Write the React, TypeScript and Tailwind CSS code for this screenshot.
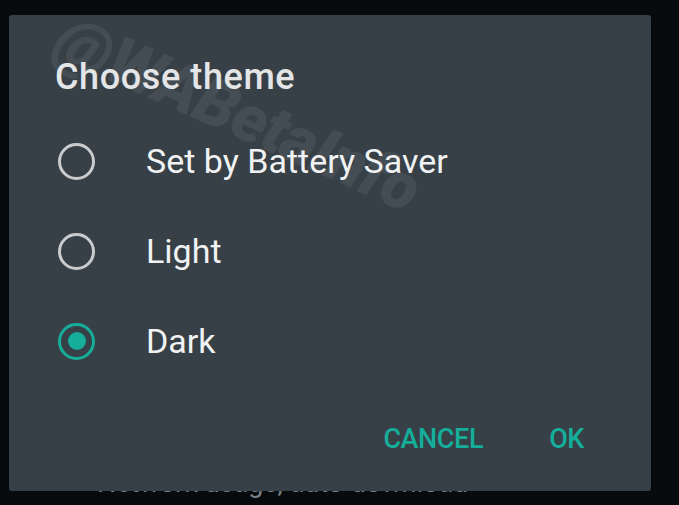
import { useState } from "react";

const options = ["Set by Battery Saver", "Light", "Dark"];

function Radio({ checked }: { checked: boolean }) {
  if (checked) {
    return (
      <span className="flex h-[37px] w-[37px] items-center justify-center rounded-full border-[3.5px] border-[#14ae9b]">
        <span className="h-[18px] w-[18px] rounded-full bg-[#14ae9b]" />
      </span>
    );
  }
  return <span className="block h-[37px] w-[37px] rounded-full border-[3.5px] border-[#c9cbcd]" />;
}

export default function App() {
  const [theme, setTheme] = useState("Dark");

  return (
    <div
      className="relative h-[505px] w-[679px] overflow-hidden bg-[#070b0e] pl-[9px] pt-[15px]"
      style={{ fontFamily: "Roboto, 'Noto Sans', sans-serif" }}
    >
      {/* text of the settings page peeking out below the dialog */}
      <div className="absolute left-[97px] top-[470px] text-[27px] leading-none text-[#7a8085]">
        Network usage, auto-download
      </div>

      <div className="relative flex h-[476px] w-[642px] flex-col overflow-hidden rounded-[3px] bg-[#374046]">
        {/* watermark */}
        <div className="pointer-events-none absolute left-[50px] top-[-14px] origin-left rotate-[24deg] select-none text-[66px] font-black italic leading-none tracking-[-1px] text-[#444d53]">
          @WABetaInfo
        </div>

        <div className="relative pl-[46px] pt-[42px] text-[36px] leading-[40px] font-medium tracking-[0.6px] text-[#e3e5e6]">
          Choose theme
        </div>

        <div className="relative mt-[19px] flex flex-col">
          {options.map((o) => (
            <button
              key={o}
              onClick={() => setTheme(o)}
              className="flex h-[90px] items-center pl-[49px] text-left"
            >
              <Radio checked={theme === o} />
              <span className="ml-[51px] text-[34px] text-[#f1f2f3]">{o}</span>
            </button>
          ))}
        </div>

        <div className="relative mt-auto flex justify-end gap-[66px] pb-[36px] pr-[67px] text-[27px] leading-[32px] font-medium tracking-[-0.4px] text-[#14ae9b]">
          <button>CANCEL</button>
          <button>OK</button>
        </div>
      </div>
    </div>
  );
}
